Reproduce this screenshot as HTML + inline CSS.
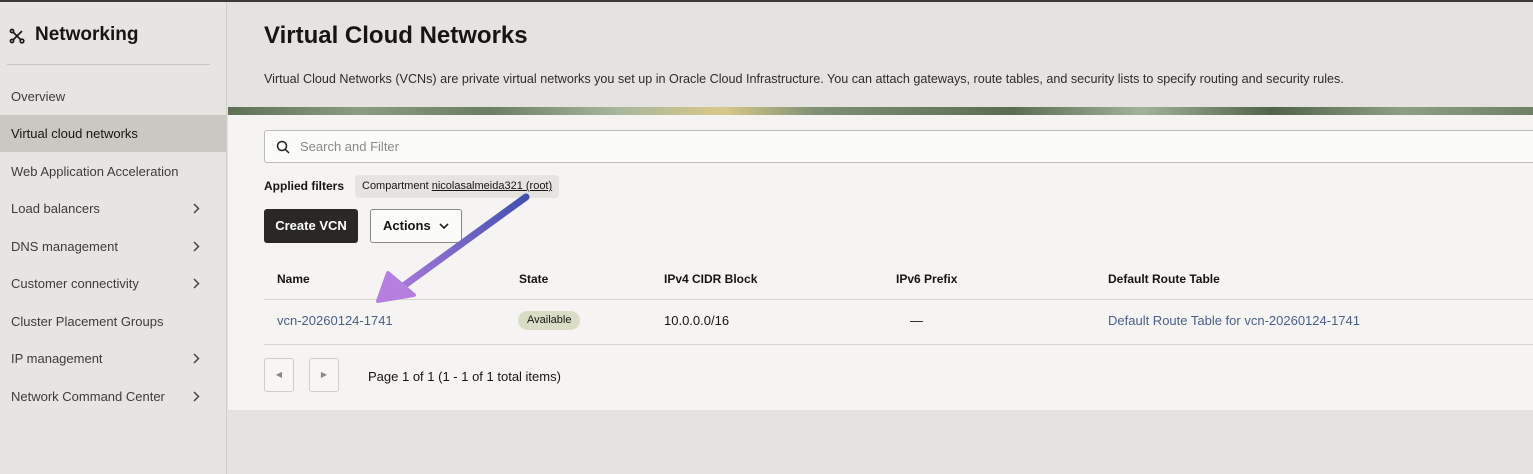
<!DOCTYPE html>
<html><head><style>
*{margin:0;padding:0;box-sizing:border-box}
body{width:1533px;height:474px;overflow:hidden;background:#e4e3df;font-family:"Liberation Sans",sans-serif;color:#161513;position:relative}
.topbar{position:absolute;left:0;top:0;width:1533px;height:2px;background:#3a3936}
.side{position:absolute;left:0;top:2px;width:227px;height:472px;background:#e6e5e1;border-right:1px solid #cfcdc8}
.side h1{position:absolute;left:35px;top:22px;font-size:19px;font-weight:bold}
.side .ic{position:absolute;left:9px;top:26px}
.side hr{position:absolute;left:7px;top:62px;width:203px;border:0;border-top:1px solid #c9c7c2}
.nav{position:absolute;left:0;width:226px;height:37px;font-size:13px;padding-left:11px;line-height:37px;color:#3e3c39}
.nav.sel{background:#cac8c3;color:#161513}
.nav svg{position:absolute;left:193px;top:13px}
.main{position:absolute;left:228px;top:2px;right:0;bottom:0}
.title{position:absolute;left:36px;top:20px;font-size:24px;font-weight:bold}
.desc{position:absolute;left:36px;top:70px;font-size:12.6px;color:#2d2c2a}
.banner{position:absolute;left:0;top:105px;width:1305px;height:9px;background:linear-gradient(90deg,#5e6f56,#8c9c83 10%,#6b7d63 20%,#a9b79e 30%,#d8c889 38%,#7f9076 45%,#5b6c53 60%,#a3b29a 70%,#52634b 80%,#8f9f86 90%,#6f8067)}
.panel{position:absolute;left:0;top:113px;width:1305px;height:295px;background:#f5f4f2}
.search{position:absolute;left:36px;top:15px;width:1280px;height:33px;background:#fbfbfa;border:1px solid #bdbbb6;border-radius:3px;font-size:13px;color:#8d8b87;line-height:31px;padding-left:35px}
.af{position:absolute;left:36px;top:64px;font-size:12px;font-weight:bold}
.chip{position:absolute;left:127px;top:60px;height:23px;padding:0 7px;background:#e6e4e0;border-radius:4px;font-size:11px;line-height:23px}
.chip u{text-decoration:underline}
.btn1{position:absolute;left:36px;top:94px;width:94px;height:34px;background:#2a2826;color:#fff;border-radius:3px;font-size:13px;line-height:34px;text-align:center;font-weight:bold}
.btn2{position:absolute;left:142px;top:94px;width:92px;height:34px;background:#fbfbfa;border:1px solid #8a8884;border-radius:3px;font-size:13px;line-height:32px;padding-left:12px;font-weight:bold}
.th{position:absolute;top:157px;font-size:12px;font-weight:bold}
.td{position:absolute;top:198px;font-size:13px}
.line{position:absolute;left:36px;width:1270px;height:1px;background:#d6d4cf}
.lnk{color:#4b5f84}
.badge{position:absolute;left:290px;top:196px;height:19px;padding:0 9px;background:#d9ddc5;border-radius:10px;font-size:11px;line-height:19px}
.pb{position:absolute;top:243px;width:30px;height:34px;border:1px solid #cfcdc8;border-radius:3px;background:#f7f6f4;color:#888;font-size:8px;text-align:center;line-height:32px}
</style></head><body>
<div class="topbar"></div>
<div class="side">
<svg class="ic" width="16" height="16" viewBox="0 0 16 16" fill="none" stroke="#161513" stroke-width="1.6"><path d="M3 3l10 10M13 3L3 13"/><circle cx="3" cy="3" r="1.6" fill="#e6e5e1"/><circle cx="13" cy="13" r="1.8" fill="#e6e5e1"/><circle cx="3" cy="13" r="1.6" fill="#e6e5e1"/></svg>
<h1>Networking</h1>
<hr>
<div class="nav" style="top:76px">Overview</div>
<div class="nav sel" style="top:113px">Virtual cloud networks</div>
<div class="nav" style="top:151px">Web Application Acceleration</div>
<div class="nav" style="top:188px">Load balancers<svg width="7" height="11" viewBox="0 0 7 11" fill="none" stroke="#444" stroke-width="1.5"><path d="M1 1l4.5 4.5L1 10"/></svg></div>
<div class="nav" style="top:226px">DNS management<svg width="7" height="11" viewBox="0 0 7 11" fill="none" stroke="#444" stroke-width="1.5"><path d="M1 1l4.5 4.5L1 10"/></svg></div>
<div class="nav" style="top:263px">Customer connectivity<svg width="7" height="11" viewBox="0 0 7 11" fill="none" stroke="#444" stroke-width="1.5"><path d="M1 1l4.5 4.5L1 10"/></svg></div>
<div class="nav" style="top:301px">Cluster Placement Groups</div>
<div class="nav" style="top:338px">IP management<svg width="7" height="11" viewBox="0 0 7 11" fill="none" stroke="#444" stroke-width="1.5"><path d="M1 1l4.5 4.5L1 10"/></svg></div>
<div class="nav" style="top:376px">Network Command Center<svg width="7" height="11" viewBox="0 0 7 11" fill="none" stroke="#444" stroke-width="1.5"><path d="M1 1l4.5 4.5L1 10"/></svg></div>
</div>
<div class="main">
<div class="title">Virtual Cloud Networks</div>
<div class="desc">Virtual Cloud Networks (VCNs) are private virtual networks you set up in Oracle Cloud Infrastructure. You can attach gateways, route tables, and security lists to specify routing and security rules.</div>
<div class="banner"></div>
<div class="panel">
<div class="search"><svg style="position:absolute;left:11px;top:9px" width="14" height="14" viewBox="0 0 14 14" fill="none" stroke="#222" stroke-width="1.5"><circle cx="6" cy="6" r="4.5"/><path d="M9.3 9.3L13 13"/></svg>Search and Filter</div>
<div class="af">Applied filters</div>
<div class="chip">Compartment <u>nicolasalmeida321 (root)</u></div>
<div class="btn1">Create VCN</div>
<div class="btn2">Actions <svg style="position:absolute;left:68px;top:12px" width="10" height="8" viewBox="0 0 10 8" fill="none" stroke="#222" stroke-width="1.6"><path d="M1 2l4 4 4-4"/></svg></div>
<div class="th" style="left:49px">Name</div>
<div class="th" style="left:291px">State</div>
<div class="th" style="left:436px">IPv4 CIDR Block</div>
<div class="th" style="left:668px">IPv6 Prefix</div>
<div class="th" style="left:880px">Default Route Table</div>
<div class="line" style="top:184px"></div>
<div class="td lnk" style="left:49px">vcn-20260124-1741</div>
<div class="badge">Available</div>
<div class="td" style="left:436px">10.0.0.0/16</div>
<div class="td" style="left:682px">—</div>
<div class="td lnk" style="left:880px">Default Route Table for vcn-20260124-1741</div>
<div class="line" style="top:229px"></div>
<div class="pb" style="left:36px">◀</div>
<div class="pb" style="left:81px">▶</div>
<div class="td" style="left:140px;top:254px">Page 1 of 1 (1 - 1 of 1 total items)</div>
</div>
</div>
<svg style="position:absolute;left:0;top:0" width="1533" height="474"><defs><linearGradient id="g" x1="528" y1="195" x2="380" y2="300" gradientUnits="userSpaceOnUse"><stop offset="0" stop-color="#3f4fb0"/><stop offset="1" stop-color="#b57fe0"/></linearGradient></defs><path d="M526 197L402 287" stroke="url(#g)" stroke-width="7" stroke-linecap="round"/><path d="M378 301L388 273L414 295Z" fill="#b57fe0" stroke="#b57fe0" stroke-width="4" stroke-linejoin="round"/></svg>
</body></html>
